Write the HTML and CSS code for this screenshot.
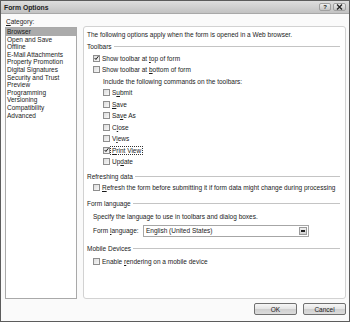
FILE: index.html
```html
<!doctype html>
<html>
<head>
<meta charset="utf-8">
<title>Form Options</title>
	<link rel="stylesheet" href="styles.css">
</head>

<body>
	<div class="dlg">
		<div class="title">
			<span class="title-text">Form Options</span>
			<span class="tbtn">?</span>
			<span class="tbtn close">
				<svg width="7" height="6" viewBox="0 0 7 6"><path d="M1 0.5 L6 5.5 M6 0.5 L1 5.5" stroke="#222" stroke-width="1.3"/></svg>
			</span>
		</div>

		<div class="main">
			<div class="cat">
				<div class="cat-label"><u>C</u>ategory:</div>
				<ul class="cat-list">
					<li class="sel">Browser</li>
					<li>Open and Save</li>
					<li>Offline</li>
					<li>E-Mail Attachments</li>
					<li>Property Promotion</li>
					<li>Digital Signatures</li>
					<li>Security and Trust</li>
					<li>Preview</li>
					<li>Programming</li>
					<li>Versioning</li>
					<li>Compatibility</li>
					<li>Advanced</li>
				</ul>
			</div>

			<div class="panel">
				<div class="row"><span>The following options apply when the form is opened in a Web browser.</span></div>

				<div class="row head"><span>Toolbars</span></div>
				<div class="row ind1"><span class="cb on"><svg width="6" height="6" viewBox="0 0 6 6"><path d="M0.8 3 L2.3 4.8 L5.3 0.8" fill="none" stroke="#1b1b1b" stroke-width="1.2"/></svg></span><span>Show toolbar at <u>t</u>op of form</span></div>
				<div class="row ind1"><span class="cb"></span><span>Show toolbar at <u>b</u>ottom of form</span></div>
				<div class="row ind2"><span>Include the following commands on the toolbars:</span></div>
				<div class="row ind2"><span class="cb"></span><span>S<u>u</u>bmit</span></div>
				<div class="row ind2"><span class="cb"></span><span><u>S</u>ave</span></div>
				<div class="row ind2"><span class="cb"></span><span>Sa<u>v</u>e As</span></div>
				<div class="row ind2"><span class="cb"></span><span>C<u>l</u>ose</span></div>
				<div class="row ind2"><span class="cb"></span><span>V<u>i</u>ews</span></div>
				<div class="row ind2"><span class="cb on"><svg width="6" height="6" viewBox="0 0 6 6"><path d="M0.8 3 L2.3 4.8 L5.3 0.8" fill="none" stroke="#1b1b1b" stroke-width="1.2"/></svg></span><span class="focus"><u>P</u>rint View</span></div>
				<div class="row ind2"><span class="cb"></span><span>Up<u>d</u>ate</span></div>

				<div class="row head gap"><span>Refreshing data</span></div>
				<div class="row ind1"><span class="cb"></span><span><u>R</u>efresh the form before submitting it if form data might change during processing</span></div>

				<div class="row head gap2"><span>Form language</span></div>
				<div class="row ind1 spec"><span>Specify the language to use in toolbars and dialog boxes.</span></div>
				<div class="row ind1 lang">
					<span class="lang-label">Form <u>l</u>anguage:</span>
					<span class="select">
						<span class="select-text">English (United States)</span>
						<span class="drop"><span class="dash"></span></span>
					</span>
				</div>

				<div class="row head gap3"><span>Mobile Devices</span></div>
				<div class="row ind1 last"><span class="cb"></span><span>Enable <u>r</u>endering on a mobile device</span></div>
			</div>
		</div>

		<div class="foot">
			<button class="btn">OK</button>
			<button class="btn">Cancel</button>
		</div>
	</div>
</body>
</html>
```

FILE: styles.css
```css
*{ margin:0; padding:0; box-sizing:border-box;}
body{
	background:#fff;
	font-family:"Liberation Sans", Arial, sans-serif;
	font-size:6.5px;
	color:#1a1a1a;
}
u{ text-decoration-thickness:0.5px; text-underline-offset:1px;}

.dlg{
	width:350px;
	height:322px;
	border:1px solid #5c5c5c;
	background:#fafafa;
	display:flex;
	flex-direction:column;
}

/* title bar */
.title{
	height:13px;
	display:flex;
	align-items:center;
	padding:0 3px 0 3px;
	background:linear-gradient(#dedede, #c2c2c2);
	border-bottom:1px solid #a8a8a8;
}
.title-text{
	flex:1;
	font-weight:bold;
	font-size:6.8px;
	color:#222;
}
.tbtn{
	width:12px;
	height:8px;
	margin-left:2px;
	border:1px solid #a0a0a0;
	border-radius:2px;
	background:linear-gradient(#eeeeee, #c4c4c4);
	font-size:6px;
	font-weight:bold;
	line-height:6px;
	text-align:center;
	display:flex;
	align-items:center;
	justify-content:center;
}
.close{ width:13px;}

/* body */
.main{
	height:286px;
	display:flex;
	padding:0 3px 0 4px;
	gap:6px;
}
.cat{
	width:72px;
	display:flex;
	flex-direction:column;
}
.cat-label{
	height:13px;
	padding-top:3px;
	line-height:9px;
	padding-left:1px;
}
.cat-list{
	list-style:none;
	flex:1;
	margin-bottom:1px;
	background:#fff;
	border:1px solid #a9a9a9;
}
.cat-list li{
	height:7.6px;
	line-height:7.6px;
	padding-left:1px;
	white-space:nowrap;
}
.cat-list .sel{ background:#ababab;}

.panel{
	flex:1;
	margin-top:12px;
	margin-bottom:1px;
	background:#fff;
	border:1px solid #d2d2d2;
	border-radius:3px;
	padding:2px 5px 0 3px;
}
.row{
	height:11.5px;
	display:flex;
	align-items:center;
	white-space:nowrap;
}
.head::after{
	content:"";
	flex:1;
	margin-left:2px;
	border-top:1px solid #c4c4c4;
}
.head{ height:12px;}
.gap{ margin-top:2.5px;}
.gap2{ margin-top:4px;}
.gap3{ margin-top:5px;}
.ind1{ padding-left:6px;}
.ind2{ padding-left:16px;}
.spec{ margin-top:1.5px;}
.last{ margin-top:1.5px;}

.cb{
	width:7px;
	height:7px;
	margin-right:2px;
	border:1px solid #8e8e8e;
	background:linear-gradient(135deg, #dcdcdc, #f8f8f8);
	display:flex;
	align-items:center;
	justify-content:center;
	flex-shrink:0;
}
.focus{
	outline:1px dotted #333;
	outline-offset:0;
	padding:0 1px;
	margin-left:-1px;
}

.lang{ height:14px; margin-top:1px;}
.lang-label{ width:50px;}
.select{
	width:166px;
	height:12px;
	border:1px solid #a6a6a6;
	background:#fff;
	display:flex;
	align-items:center;
	padding:0 1px 0 2px;
}
.select-text{ flex:1;}
.drop{
	width:8px;
	height:8px;
	border:1px solid #9a9a9a;
	background:linear-gradient(#f0f0f0, #d0d0d0);
	display:flex;
	align-items:center;
	justify-content:center;
}
.dash{
	width:4px;
	height:2px;
	background:#222;
}

/* buttons */
.foot{
	flex:1;
	display:flex;
	justify-content:flex-end;
	align-items:flex-start;
	gap:6px;
	padding:3px 3px 0 0;
}
.btn{
	width:43px;
	height:12px;
	border:1px solid #707070;
	border-radius:2px;
	background:linear-gradient(#f6f6f6 0%, #e4e4e4 50%, #cfcfcf 51%, #dcdcdc 100%);
	font-family:"Liberation Sans", Arial, sans-serif;
	font-size:6.5px;
	color:#1a1a1a;
}
```
